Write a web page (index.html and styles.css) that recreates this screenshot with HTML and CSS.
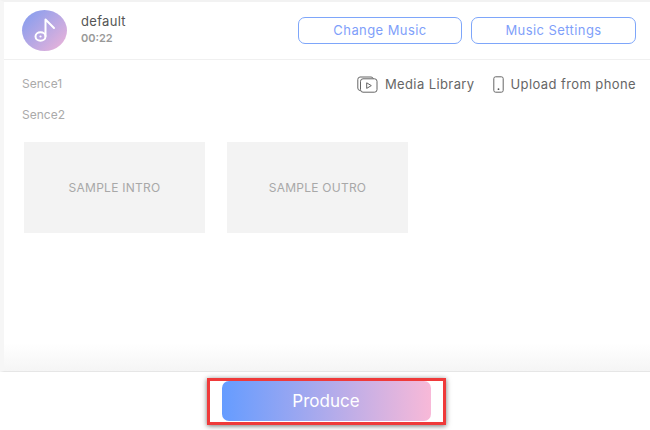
FILE: index.html
```html
<!DOCTYPE html>
<html lang="en">
<head>
<meta charset="utf-8">
<title>Produce</title>
<link rel="stylesheet" href="styles.css">
</head>
<body>
<div class="app">
  <main class="panel">
    <header class="music-bar">
      <div class="avatar">
        <svg width="24" height="26" viewBox="0 0 24 26" fill="none" stroke="#fff" stroke-width="2" stroke-linecap="round" stroke-linejoin="round">
          <ellipse cx="7.5" cy="19.5" rx="5" ry="4.2"/>
          <circle cx="7.5" cy="19.5" r="1.1" fill="#fff" stroke="none"/>
          <path d="M12.5 19V2.5L21 11"/>
        </svg>
      </div>
      <div class="track">
        <div class="track-name">default</div>
        <div class="track-time">00:22</div>
      </div>
      <div class="bar-actions">
        <button class="outline-btn btn-change">Change Music</button>
        <button class="outline-btn btn-settings">Music Settings</button>
      </div>
    </header>
    <section class="scenes">
      <div class="scene-row">
        <span class="scene-label scene-one">Sence1</span>
        <div class="sources">
          <span class="source">
            <svg width="21" height="17" viewBox="0 0 21 17" fill="none" stroke="#666" stroke-width="1" stroke-linejoin="round">
              <path d="M3.5 14.5H3A2.5 2.5 0 0 1 .8 12V3.5A2.5 2.5 0 0 1 3 1h11a2.5 2.5 0 0 1 2.4 1.8"/>
              <rect x="3.5" y="2.8" width="16.5" height="13.4" rx="2.5" fill="#fff"/>
              <path d="M9.7 6.8v5.6l4.6-2.8z"/>
            </svg>
            Media Library
          </span>
          <span class="source">
            <svg width="11" height="17" viewBox="0 0 11 17" fill="none" stroke="#666" stroke-width="1">
              <rect x=".8" y=".8" width="9.4" height="15.4" rx="1.8"/>
              <circle cx="5.5" cy="13.2" r=".9" fill="#555" stroke="none"/>
            </svg>
            Upload from phone
          </span>
        </div>
      </div>
      <div class="scene-label scene-two">Sence2</div>
      <div class="samples">
        <div class="sample">SAMPLE INTRO</div>
        <div class="sample">SAMPLE OUTRO</div>
      </div>
    </section>
    <div class="fade"></div>
  </main>
  <footer class="footer">
    <div class="highlight">
      <button class="produce">Produce</button>
    </div>
  </footer>
</div>
</body>
</html>
```
FILE: styles.css
```css
* { box-sizing: border-box; }
html, body { margin: 0; height: 100%; }
body {
  background: #fff;
  font-family: "Inter", "Liberation Sans", sans-serif;
  overflow: hidden;
}
.app {
  width: 650px;
  height: 430px;
  display: flex;
  flex-direction: column;
}
.panel {
  height: 372px;
  flex: none;
  display: flex;
  flex-direction: column;
  border-top: 2px solid #f2f2f2;
  border-left: 4px solid #f6f6f6;
  border-bottom: 1px solid #e6e6e6;
}
.music-bar {
  height: 58px;
  flex: none;
  display: flex;
  align-items: center;
  padding: 0 14px 0 18px;
  border-bottom: 1px solid #f0f0f0;
}
.avatar {
  width: 45px;
  height: 41px;
  border-radius: 50%;
  background: linear-gradient(135deg, #7f9cf0, #f0b4d8);
  display: flex;
  align-items: center;
  justify-content: center;
  margin-top: -1px;
}
.track { margin-left: 14px; margin-top: -3px; }
.track-name { font-size: 13px; line-height: 17px; color: #555; letter-spacing: .3px; }
.track-time { font-size: 11px; line-height: 16px; color: #999; font-weight: 600; }
.bar-actions { margin-left: auto; display: flex; gap: 9px; margin-top: -1px; }
.outline-btn {
  height: 27px;
  background: #fff;
  border: 1.5px solid #7ea6fa;
  border-radius: 7px;
  color: #7f9ffa;
  font: 400 13px "Inter", "Liberation Sans", sans-serif;
  letter-spacing: .42px;
  padding: 0;
}
.btn-change { width: 164px; }
.btn-settings { width: 165px; }
.scenes { flex: none; padding: 0 14px 0 18px; }
.scene-row {
  display: flex;
  align-items: center;
  justify-content: space-between;
  height: 26px;
  margin-top: 11px;
}
.scene-label { font-size: 12px; color: #aaa; }
.scene-one { margin-bottom: 2px; }
.scene-two { margin-top: 9px; line-height: 17px; }
.sources { display: flex; gap: 18px; }
.source {
  display: flex;
  align-items: center;
  gap: 7px;
  font-size: 13px;
  color: #666;
  letter-spacing: .4px;
}
.samples { display: flex; gap: 22px; margin: 19px 0 0 2px; }
.sample {
  width: 181px;
  height: 91px;
  background: #f3f3f3;
  color: #a8a8a8;
  font-size: 12px;
  letter-spacing: .25px;
  display: flex;
  align-items: center;
  justify-content: center;
}
.fade {
  flex: 1;
  margin-top: auto;
  background: linear-gradient(to bottom, #fff 0, #fff 80%, #f5f5f5 100%);
}
.footer {
  flex: 1;
  display: flex;
  justify-content: center;
  padding: 6px 0 0 2px;
}
.highlight {
  width: 239px;
  height: 47px;
  border: 3px solid #ef3a3a;
  box-shadow: 0 1px 5px rgba(0, 0, 0, .55);
  display: flex;
  justify-content: center;
}
.produce {
  width: 209px;
  height: 40px;
  border: 0;
  border-radius: 7px;
  background: linear-gradient(to right, #659cff, #f8b9d8);
  color: #fff;
  font: 400 17px "Inter", "Liberation Sans", sans-serif;
  padding: 0;
}
```
